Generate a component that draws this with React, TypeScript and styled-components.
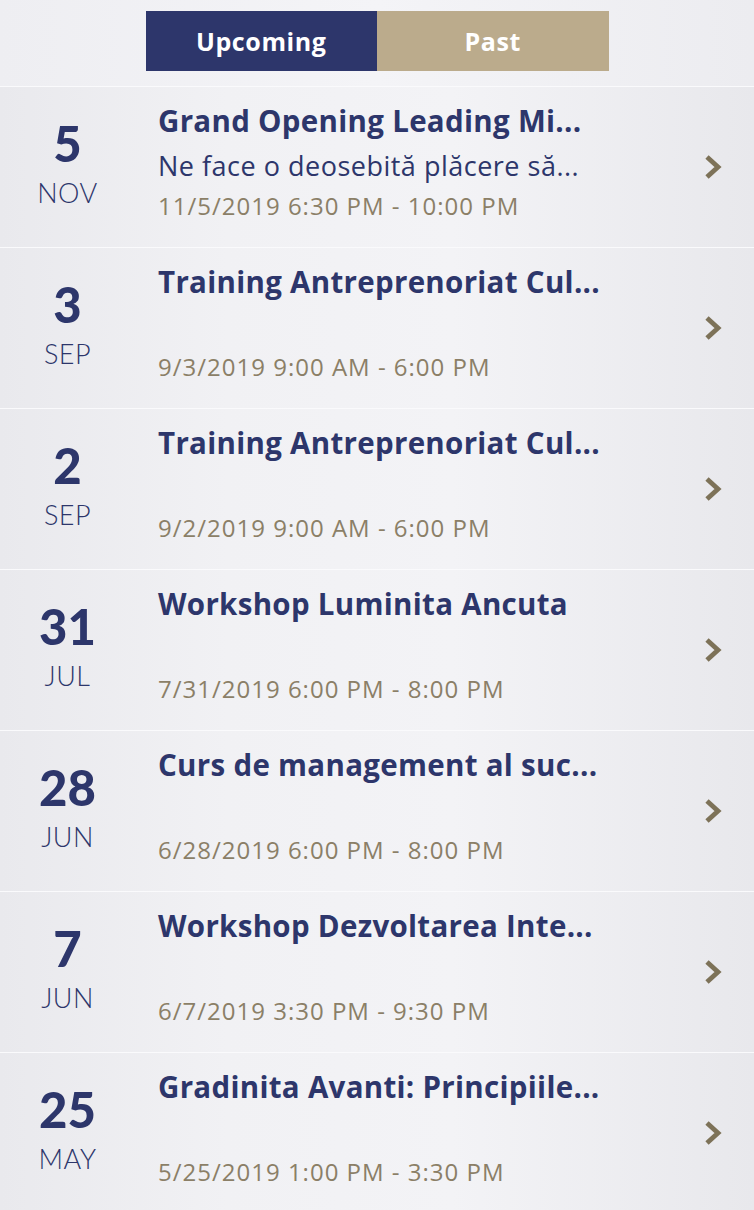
import React from "react";
import styled, {createGlobalStyle} from "styled-components";

const GlobalStyle = createGlobalStyle`
    html, body {
        margin: 0;
        padding: 0;
        background: #f1f1f4;
        font-family: "Lato", "Noto Sans", sans-serif;
    }
`;

type EventItem = {
    day: string;
    month: string;
    title: string;
    description?: string;
    time: string;
};

const events: EventItem[] = [
    {
        day: "5",
        month: "NOV",
        title: "Grand Opening Leading Mi...",
        description: "Ne face o deosebită plăcere să...",
        time: "11/5/2019 6:30 PM - 10:00 PM",
    },
    {day: "3", month: "SEP", title: "Training Antreprenoriat Cul...", time: "9/3/2019 9:00 AM - 6:00 PM"},
    {day: "2", month: "SEP", title: "Training Antreprenoriat Cul...", time: "9/2/2019 9:00 AM - 6:00 PM"},
    {day: "31", month: "JUL", title: "Workshop Luminita Ancuta", time: "7/31/2019 6:00 PM - 8:00 PM"},
    {day: "28", month: "JUN", title: "Curs de management al suc...", time: "6/28/2019 6:00 PM - 8:00 PM"},
    {day: "7", month: "JUN", title: "Workshop Dezvoltarea Inte...", time: "6/7/2019 3:30 PM - 9:30 PM"},
    {day: "25", month: "MAY", title: "Gradinita Avanti: Principiile...", time: "5/25/2019 1:00 PM - 3:30 PM"},
];

const Chevron = () => (
    <svg width="20" height="26" viewBox="0 0 20 26">
        <polyline points="4,3 15,13 4,23" fill="none" stroke="#7d7258" strokeWidth="4.8" strokeLinecap="butt" strokeLinejoin="miter" />
    </svg>
);

const EventRow = ({day, month, title, description, time}: EventItem) => (
    <Row>
        <DateBox>
            <Day>{day}</Day>
            <Month>{month}</Month>
        </DateBox>
        <Details>
            <Title>{title}</Title>
            <Description>{description ?? "\u00a0"}</Description>
            <Time>{time}</Time>
        </Details>
        <Arrow>
            <Chevron />
        </Arrow>
    </Row>
);

const App = () => {
    return (
        <Page>
            <GlobalStyle />
            <Header>
                <Tabs>
                    <Tab $active>Upcoming</Tab>
                    <Tab>Past</Tab>
                </Tabs>
            </Header>
            <List>
                {events.map((e, i) => (
                    <EventRow key={i} {...e} />
                ))}
            </List>
        </Page>
    );
};

const Page = styled.div`
    width: 754px;
    height: 1210px;
    overflow: hidden;
    background: linear-gradient(90deg, #eeeef2 0%, #f4f4f7 50%, #ececf0 100%);
`;

const Header = styled.div`
    display: flex;
    justify-content: center;
    padding: 11px 0 15px 0;
`;

const Tabs = styled.div`
    display: flex;
    width: 463px;
    height: 60px;
`;

const Tab = styled.div<{$active?: boolean}>`
    flex: 1;
    display: flex;
    align-items: center;
    justify-content: center;
    background: ${({$active}) => ($active ? "#2d366b" : "#bbab8c")};
    color: #ffffff;
    font-family: "Open Sans", "Lato", sans-serif;
    font-weight: 700;
    font-size: 25px;
    letter-spacing: 0.6px;
`;

const List = styled.div`
    display: flex;
    flex-direction: column;
`;

const Row = styled.div`
    display: flex;
    align-items: stretch;
    height: 160px;
    border-top: 1px solid #fafafc;
    background: linear-gradient(90deg, #e9e9ed 0%, #f1f1f4 30%, #f3f3f6 60%, #e8e8ec 100%);
`;

const DateBox = styled.div`
    width: 135px;
    display: flex;
    flex-direction: column;
    align-items: center;
    padding-top: 28px;
    color: #2d366b;
`;

const Day = styled.div`
    font-weight: 900;
    font-size: 49px;
    line-height: 56px;
`;

const Month = styled.div`
    font-weight: 300;
    font-size: 27px;
    line-height: 30px;
    margin-top: 7px;
    letter-spacing: 0.5px;
`;

const Details = styled.div`
    flex: 1;
    display: flex;
    flex-direction: column;
    padding: 17px 0 0 23px;
    font-family: "Open Sans", "Lato", sans-serif;
`;

const Title = styled.div`
    color: #2d366b;
    font-weight: 700;
    font-size: 29.5px;
    line-height: 34px;
    letter-spacing: 0.3px;
    white-space: nowrap;
`;

const Description = styled.div`
    color: #2d366b;
    font-weight: 400;
    font-size: 27px;
    line-height: 32px;
    margin-top: 12px;
    letter-spacing: 0.5px;
    white-space: nowrap;
`;

const Time = styled.div`
    color: #8b7f67;
    font-weight: 400;
    font-size: 24px;
    line-height: 32px;
    margin-top: 8px;
    letter-spacing: 1px;
    white-space: nowrap;
`;

const Arrow = styled.div`
    width: 51px;
    display: flex;
    align-items: center;
    justify-content: flex-start;
`;

export default App;
